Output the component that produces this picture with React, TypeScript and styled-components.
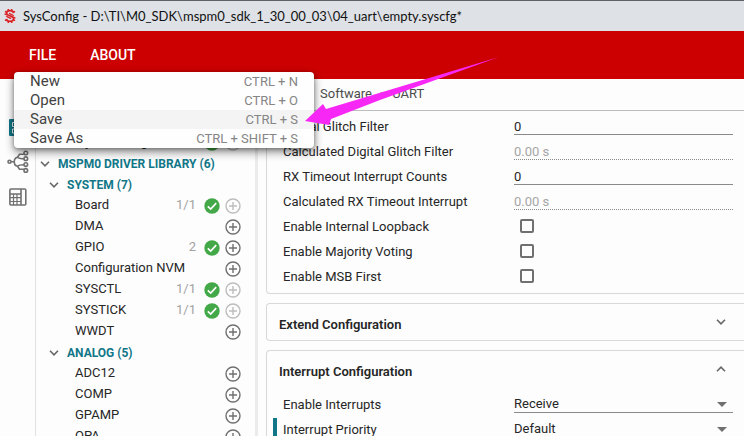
import React from "react";
import styled, { createGlobalStyle, css } from "styled-components";

const GlobalStyle = createGlobalStyle`
  *, *::before, *::after { box-sizing: border-box; }
  html, body, #root { height: 100%; margin: 0; }
  body {
    overflow: hidden;
    background: #fdfdfd;
    color: #262626;
    font: 14px/20px Roboto, "Liberation Sans", sans-serif;
  }
  button, input, select { font: inherit; color: inherit; margin: 0; padding: 0; border: 0; background: none; border-radius: 0; }
  button { cursor: pointer; }
`;

const Window = styled.div`
  display: flex;
  flex-direction: column;
  height: 100%;
`;

const TitleBar = styled.header`
  display: flex;
  align-items: center;
  gap: 7px;
  flex: none;
  height: 31px;
  padding-left: 4px;
  border-top: 1px solid #606168;
  background: #dee1e6;
  color: #111;
  font: 13px/20px Lato, "Open Sans", sans-serif;
`;

const TitleText = styled.h1`
  margin: 0;
  font: inherit;
  white-space: nowrap;
`;

const AppBar = styled.nav`
  position: relative;
  z-index: 2;
  display: flex;
  align-items: center;
  gap: 34px;
  flex: none;
  height: 48px;
  padding-left: 29px;
  background: #c00;
`;

const AppBarButton = styled.button`
  color: #fff;
  font-size: 14px;
  font-weight: 500;
  text-transform: uppercase;
`;

const Menu = styled.div`
  position: absolute;
  top: 41px;
  left: 14px;
  width: 300px;
  overflow: hidden;
  border-radius: 4px;
  background: #fefefe;
  box-shadow: 0 4px 10px rgba(0, 0, 0, 0.45), 0 1px 4px rgba(0, 0, 0, 0.3);
`;

const MenuItem = styled.button<{ $active?: boolean }>`
  display: flex;
  align-items: center;
  justify-content: space-between;
  width: 100%;
  height: 19px;
  padding: 0 16px 2px;
  background: ${(p) => (p.$active ? "#f4f4f4" : "transparent")};
  color: #424242;
  font-size: 15px;
`;

const Shortcut = styled.span`
  padding-top: 2px;
  color: #858585;
  font-size: 13px;
`;

const Body = styled.div`
  display: flex;
  flex: 1;
  min-height: 0;
`;

const Rail = styled.aside`
  display: flex;
  flex-direction: column;
  align-items: center;
  gap: 11px;
  flex: none;
  width: 36px;
  padding-top: 36px;
  border-right: 1px solid #e2e2e2;
`;

const RailButton = styled.button`
  display: flex;
  flex: none;
  height: 24px;
`;

const Sidebar = styled.aside`
  flex: none;
  width: 222px;
  padding-top: 53px;
  overflow: hidden;
  border-right: 3px solid #ebebeb;
`;

const TreeRow = styled.div<{ $indent: number }>`
  display: flex;
  align-items: center;
  height: 21px;
  padding: 0 14px 0 ${(p) => p.$indent}px;
`;

const GroupButton = styled.button`
  display: flex;
  align-items: center;
  gap: 8px;
  color: #117788;
  font-size: 12px;
  font-weight: 700;
  white-space: nowrap;
`;

const ModuleName = styled.span`
  flex: 1;
  padding-bottom: 2px;
  font-size: 13px;
  white-space: nowrap;
`;

const ModuleCount = styled.span`
  margin-right: 8px;
  padding-bottom: 2px;
  color: #a2a2a2;
  font-size: 13px;
`;

const StatusIcon = styled.span`
  display: flex;
  margin-right: 5px;
`;

const AddButton = styled.button`
  display: flex;
`;

const Main = styled.main`
  display: flex;
  flex-direction: column;
  flex: 1;
  min-width: 0;
`;

const Breadcrumbs = styled.nav`
  display: flex;
  align-items: center;
  gap: 8px;
  flex: none;
  height: 32px;
  padding: 0 0 2px 62px;
  border-bottom: 1px solid #bdbdbd;
  color: #4c4c4c;
`;

const Crumb = styled.a`
  color: inherit;
  font-size: 13px;
  text-decoration: none;
`;

const Panels = styled.div`
  display: flex;
  flex-direction: column;
  gap: 9px;
  flex: 1;
  min-height: 0;
  padding-left: 8px;
  overflow: hidden;
`;

const Card = styled.section<{ $scrolled?: boolean }>`
  flex: none;
  border: 1px solid #d8d8d8;
  border-right: 0;
  border-radius: 4px 0 0 4px;
  ${(p) =>
    p.$scrolled &&
    css`
      padding: 4px 0 3px;
      border-top: 0;
      border-top-left-radius: 0;
    `}
`;

const CardHeader = styled.button`
  display: flex;
  align-items: center;
  justify-content: space-between;
  width: 100%;
  height: 36px;
  padding: 6px 18px 0 12px;
  font-size: 13px;
  font-weight: 600;
  > svg { margin-bottom: 7px; }
`;

const CardBody = styled.div`
  padding-top: 6px;
`;

const Field = styled.div<{ $changed?: boolean }>`
  display: grid;
  grid-template-columns: 231px 1fr;
  align-items: start;
  height: 25px;
  margin-left: 6px;
  padding: 2px 11px 0 6px;
  border-left: 4px solid ${(p) => (p.$changed ? "#117788" : "transparent")};
`;

const FieldLabel = styled.label`
  font-size: 13px;
  line-height: 20px;
  white-space: nowrap;
`;

const TextInput = styled.input`
  width: 100%;
  height: 18px;
  padding-top: 2px;
  border-bottom: 1px solid #8a8a8a;
  outline: 0;
  font-size: 13px;
  line-height: 15px;
  &:disabled {
    border-bottom: 1px dotted #8a8a8a;
    color: #a6a6a6;
  }
`;

const CheckBox = styled.input`
  appearance: none;
  width: 14px;
  height: 14px;
  margin: 2px 0 0 6px;
  border: 2px solid #707070;
  border-radius: 2px;
`;

const SelectWrap = styled.div`
  display: grid;
  align-items: center;
  height: 18px;
  border-bottom: 1px solid #8a8a8a;
  > * { grid-area: 1 / 1; }
  > svg { justify-self: end; margin: 2px 6px 0 0; pointer-events: none; }
`;

const Select = styled.select`
  appearance: none;
  width: 100%;
  height: 17px;
  outline: 0;
  font-size: 13px;
  line-height: 17px;
`;

const ArrowMark = styled.svg`
  position: absolute;
  z-index: 3;
  top: 56px;
  left: 304px;
  pointer-events: none;
`;

const Chevron = ({ up = false }: { up?: boolean }) => (
  <svg width="10" height="6" viewBox="0 0 10 6" fill="none" stroke="#666" strokeWidth="1.6" aria-hidden="true">
    <path d={up ? "M1 5.2 5 1.2 9 5.2" : "M1 .8 5 4.8 9 .8"} />
  </svg>
);

const Logo = () => (
  <svg width="12" height="16" viewBox="0 0 12 16" fill="none" stroke="#dc2226" aria-hidden="true">
    <path strokeWidth="1.7" d="M9.600 5.200C9.400 3.500 8 2.700 6 2.700 3.900 2.700 2.500 3.600 2.500 5.200c0 3.100 7.100 2.300 7.100 5.400 0 1.700-1.500 2.700-3.600 2.700-2 0-3.400-.8-3.600-2.500" />
    <path strokeWidth="1.300" d="M5 5.300c1.500 1 4.300 1.200 4.600 3M2.400 7.700c.5 1.700 3.200 1.800 4.600 3" />
    <path strokeWidth="1.500" d="M4.300 1v2M7.700 1v2M4.300 13v2M7.700 13v2M1 3.300l1.600 1M11 3.300l-1.600 1M.6 6.200h2M9.400 9.800h2M1 12.700l1.600-1M11 12.700l-1.600-1" />
  </svg>
);

const BoardIcon = () => (
  <svg width="18" height="24" viewBox="0 0 18 24" aria-hidden="true">
    <rect y="4" width="18" height="17" rx="1" fill="#117788" />
    <path d="M3.500 7.500h4v4h-4zM3.500 14h4v4h-4zM10.500 7.500h4v4h-4zM10.500 14h4v4h-4z" fill="none" stroke="#fff" />
  </svg>
);

const TreeIcon = () => (
  <svg width="22" height="24" viewBox="0 0 22 24" fill="none" stroke="#707070" strokeWidth="1.600" aria-hidden="true">
    <circle cx="2.500" cy="11.800" r="1.500" />
    <circle cx="18.800" cy="3" r="1.800" />
    <circle cx="18.800" cy="8.700" r="1.800" />
    <circle cx="18.800" cy="14.600" r="1.800" />
    <circle cx="18.800" cy="20.400" r="1.800" />
    <path d="M4 11.800h3M17 4.200h-4.500L10.500 7.200C6.200 8 6.200 15.500 10.500 16.300l2 3H17M10.500 7.200c1.500 1.500 3.500 1.500 6.500 1.500M10.500 16.300c1.500-1.500 3.500-1.500 6.500-1.500" />
  </svg>
);

const CalculatorIcon = () => (
  <svg width="18" height="24" viewBox="0 0 18 24" fill="none" stroke="#707070" aria-hidden="true">
    <rect x=".9" y="4" width="15.900" height="16" rx="1" strokeWidth="1.600" />
    <path strokeWidth="1.600" d="M12 4v16M1 9h11" />
    <path strokeWidth="1.200" d="M4.500 9v11M8 9v11M1 12.700h11M1 16.500h11" />
  </svg>
);

const CheckIcon = () => (
  <svg width="16" height="16" viewBox="0 0 16 16" aria-hidden="true">
    <circle cx="8" cy="8" r="7.700" fill="#43a848" />
    <path d="M3.800 8.300 6.700 11 12.200 5.200" fill="none" stroke="#fff" strokeWidth="1.700" />
  </svg>
);

const PlusIcon = ({ muted }: { muted?: boolean }) => (
  <svg width="16" height="16" viewBox="0 0 16 16" fill="none" stroke={muted ? "#bdbdbd" : "#707070"} strokeWidth="1.400" aria-hidden="true">
    <circle cx="8" cy="8" r="7" />
    <path d="M8 4v8M4 8h8" />
  </svg>
);

const DropIcon = () => (
  <svg width="10" height="5" viewBox="0 0 10 5" aria-hidden="true">
    <path d="M0 0h10L5 5z" fill="#707070" />
  </svg>
);

const menuItems = [
  { label: "New", keys: "CTRL + N" },
  { label: "Open", keys: "CTRL + O" },
  { label: "Save", keys: "CTRL + S", active: true },
  { label: "Save As", keys: "CTRL + SHIFT + S" },
];

type ModuleProps = { name: string; count?: string; full?: boolean; indent?: number; checked?: boolean };

const Module = ({ name, count, full, indent = 39, checked = !!count }: ModuleProps) => (
  <TreeRow $indent={indent}>
    <ModuleName>{name}</ModuleName>
    {count && <ModuleCount>{count}</ModuleCount>}
    {checked && (
      <StatusIcon>
        <CheckIcon />
      </StatusIcon>
    )}
    <AddButton aria-label={`Add ${name}`} disabled={full}>
      <PlusIcon muted={full} />
    </AddButton>
  </TreeRow>
);

const Group = ({ name, indent }: { name: string; indent: number }) => (
  <TreeRow $indent={indent}>
    <GroupButton aria-expanded="true">
      <Chevron />
      {name}
    </GroupButton>
  </TreeRow>
);

const TextField = ({ id, label, value, disabled }: { id: string; label: string; value: string; disabled?: boolean }) => (
  <Field>
    <FieldLabel htmlFor={id}>{label}</FieldLabel>
    <TextInput id={id} defaultValue={value} disabled={disabled} />
  </Field>
);

const CheckField = ({ id, label }: { id: string; label: string }) => (
  <Field>
    <FieldLabel htmlFor={id}>{label}</FieldLabel>
    <CheckBox id={id} type="checkbox" />
  </Field>
);

const SelectField = ({ id, label, value, changed }: { id: string; label: string; value: string; changed?: boolean }) => (
  <Field $changed={changed}>
    <FieldLabel htmlFor={id}>{label}</FieldLabel>
    <SelectWrap>
      <Select id={id} defaultValue={value}>
        <option>{value}</option>
      </Select>
      <DropIcon />
    </SelectWrap>
  </Field>
);

export default function App() {
  return (
    <Window>
      <GlobalStyle />
      <TitleBar>
        <Logo />
        <TitleText>{"SysConfig - D:\\TI\\M0_SDK\\mspm0_sdk_1_30_00_03\\04_uart\\empty.syscfg*"}</TitleText>
      </TitleBar>
      <AppBar>
        <AppBarButton aria-expanded="true">File</AppBarButton>
        <AppBarButton>About</AppBarButton>
        <Menu>
          {menuItems.map((item) => (
            <MenuItem key={item.label} $active={item.active}>
              {item.label}
              <Shortcut>{item.keys}</Shortcut>
            </MenuItem>
          ))}
        </Menu>
      </AppBar>
      <Body>
        <Rail>
          <RailButton aria-label="Modules"><BoardIcon /></RailButton>
          <RailButton aria-label="Clock tree"><TreeIcon /></RailButton>
          <RailButton aria-label="Calculator"><CalculatorIcon /></RailButton>
        </Rail>
        <Sidebar>
          <Module name="Project Configuration" indent={30} full checked />
          <Group name="MSPM0 DRIVER LIBRARY (6)" indent={4} />
          <Group name="SYSTEM (7)" indent={13} />
          <Module name="Board" count="1/1" full />
          <Module name="DMA" />
          <Module name="GPIO" count="2" />
          <Module name="Configuration NVM" />
          <Module name="SYSCTL" count="1/1" full />
          <Module name="SYSTICK" count="1/1" full />
          <Module name="WWDT" />
          <Group name="ANALOG (5)" indent={13} />
          <Module name="ADC12" />
          <Module name="COMP" />
          <Module name="GPAMP" />
          <Module name="OPA" />
        </Sidebar>
        <Main>
          <Breadcrumbs aria-label="Breadcrumb">
            <Crumb href="#software">Software</Crumb>
            <span>›</span>
            <Crumb href="#uart">UART</Crumb>
          </Breadcrumbs>
          <Panels>
            <Card $scrolled>
              <TextField id="glitch" label="Digital Glitch Filter" value="0" />
              <TextField id="glitch-calc" label="Calculated Digital Glitch Filter" value="0.00 s" disabled />
              <TextField id="rx" label="RX Timeout Interrupt Counts" value="0" />
              <TextField id="rx-calc" label="Calculated RX Timeout Interrupt" value="0.00 s" disabled />
              <CheckField id="loopback" label="Enable Internal Loopback" />
              <CheckField id="voting" label="Enable Majority Voting" />
              <CheckField id="msb" label="Enable MSB First" />
            </Card>
            <Card>
              <CardHeader aria-expanded="false">
                Extend Configuration
                <Chevron />
              </CardHeader>
            </Card>
            <Card>
              <CardHeader aria-expanded="true">
                Interrupt Configuration
                <Chevron up />
              </CardHeader>
              <CardBody>
                <SelectField id="interrupts" label="Enable Interrupts" value="Receive" />
                <SelectField id="priority" label="Interrupt Priority" value="Default" changed />
              </CardBody>
            </Card>
          </Panels>
        </Main>
      </Body>
      <ArrowMark width="196" height="72" viewBox="0 0 196 72" aria-hidden="true">
        <path d="M1 65 19 48 22 53 195 1 76 44 27 63 25 69z" fill="#f727f5" />
      </ArrowMark>
    </Window>
  );
}
